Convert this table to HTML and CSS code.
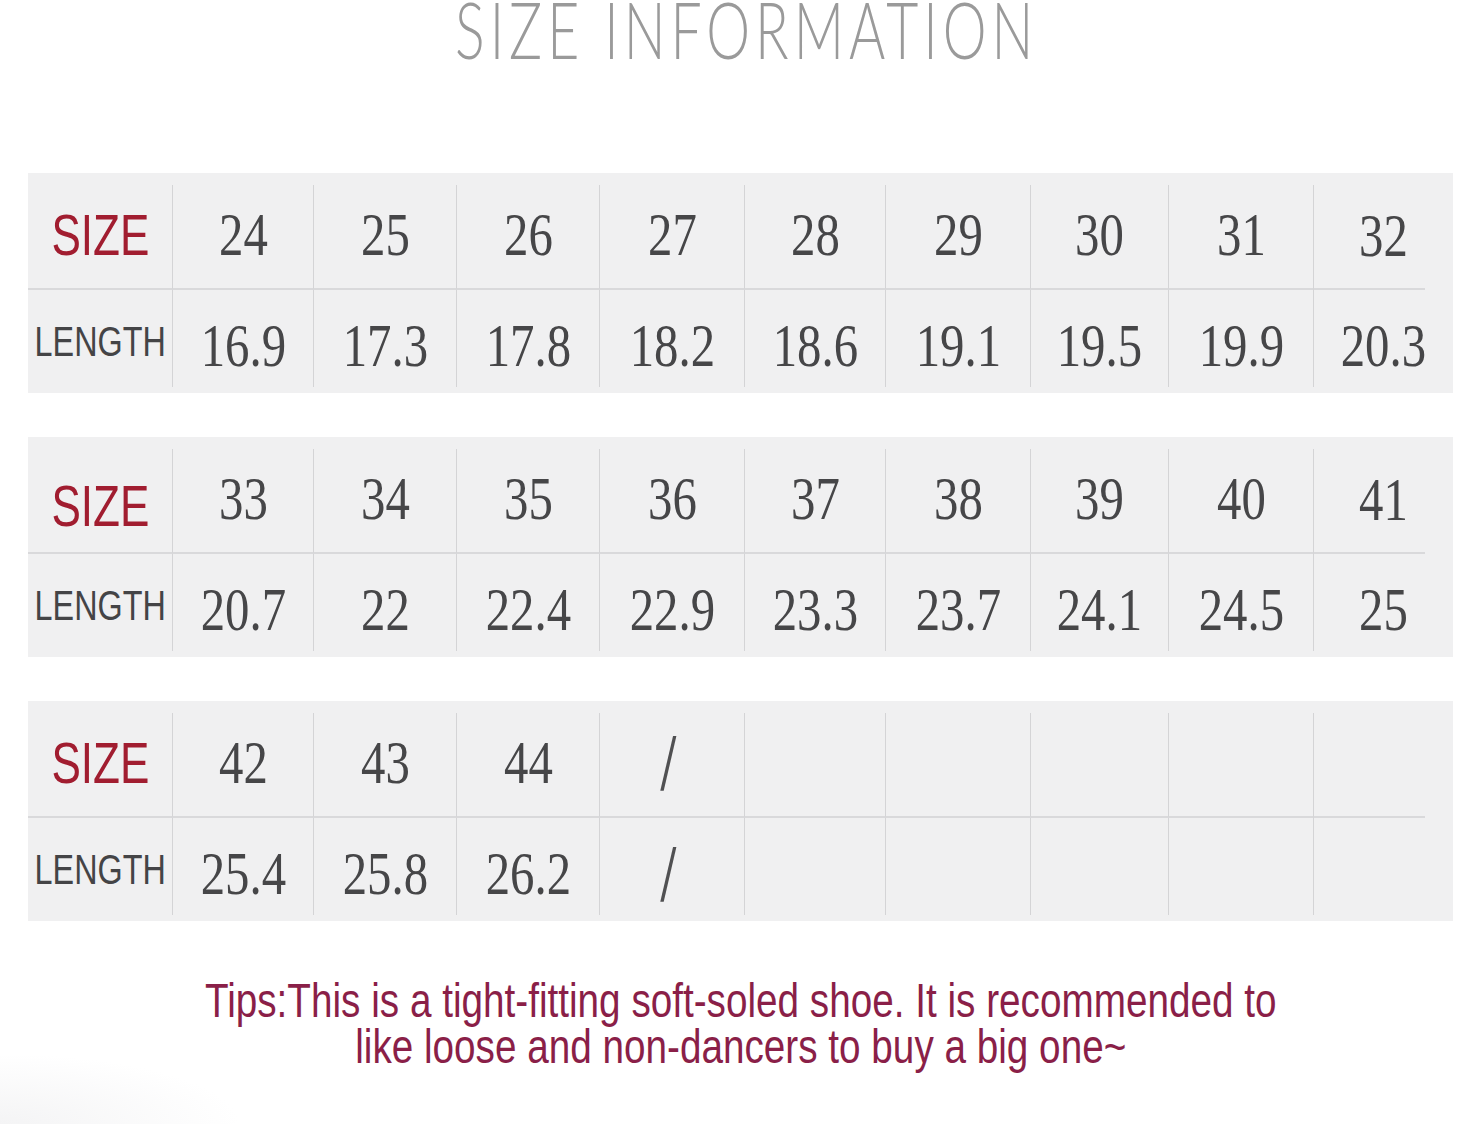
FILE: index.html
```html
<!DOCTYPE html>
<html lang="en">
<head>
<meta charset="utf-8">
<title>Size Information</title>
<link rel="stylesheet" href="styles.css">
</head>
<body>
<main class="page">
  <header class="header">
    <h1 class="title"><span class="title__text">SIZE INFORMATION</span></h1>
  </header>

  <section class="chart">
    <div class="panel">
      <div class="cell cell--top cell--label"><span class="label label--size">SIZE</span></div>
      <div class="cell cell--top cell--line"><span class="num">24</span></div>
      <div class="cell cell--top cell--line"><span class="num">25</span></div>
      <div class="cell cell--top cell--line"><span class="num">26</span></div>
      <div class="cell cell--top cell--line"><span class="num">27</span></div>
      <div class="cell cell--top cell--line"><span class="num">28</span></div>
      <div class="cell cell--top cell--line"><span class="num">29</span></div>
      <div class="cell cell--top cell--line"><span class="num">30</span></div>
      <div class="cell cell--top cell--line"><span class="num">31</span></div>
      <div class="cell cell--top cell--line cell--end"><span class="num">32</span></div>

      <div class="cell cell--bottom cell--label"><span class="label label--length">LENGTH</span></div>
      <div class="cell cell--bottom cell--line"><span class="num">16.9</span></div>
      <div class="cell cell--bottom cell--line"><span class="num">17.3</span></div>
      <div class="cell cell--bottom cell--line"><span class="num">17.8</span></div>
      <div class="cell cell--bottom cell--line"><span class="num">18.2</span></div>
      <div class="cell cell--bottom cell--line"><span class="num">18.6</span></div>
      <div class="cell cell--bottom cell--line"><span class="num">19.1</span></div>
      <div class="cell cell--bottom cell--line"><span class="num">19.5</span></div>
      <div class="cell cell--bottom cell--line"><span class="num">19.9</span></div>
      <div class="cell cell--bottom cell--line"><span class="num">20.3</span></div>
    </div>

    <div class="panel">
      <div class="cell cell--top cell--label"><span class="label label--size label--low">SIZE</span></div>
      <div class="cell cell--top cell--line"><span class="num">33</span></div>
      <div class="cell cell--top cell--line"><span class="num">34</span></div>
      <div class="cell cell--top cell--line"><span class="num">35</span></div>
      <div class="cell cell--top cell--line"><span class="num">36</span></div>
      <div class="cell cell--top cell--line"><span class="num">37</span></div>
      <div class="cell cell--top cell--line"><span class="num">38</span></div>
      <div class="cell cell--top cell--line"><span class="num">39</span></div>
      <div class="cell cell--top cell--line"><span class="num">40</span></div>
      <div class="cell cell--top cell--line cell--end"><span class="num">41</span></div>

      <div class="cell cell--bottom cell--label"><span class="label label--length">LENGTH</span></div>
      <div class="cell cell--bottom cell--line"><span class="num">20.7</span></div>
      <div class="cell cell--bottom cell--line"><span class="num">22</span></div>
      <div class="cell cell--bottom cell--line"><span class="num">22.4</span></div>
      <div class="cell cell--bottom cell--line"><span class="num">22.9</span></div>
      <div class="cell cell--bottom cell--line"><span class="num">23.3</span></div>
      <div class="cell cell--bottom cell--line"><span class="num">23.7</span></div>
      <div class="cell cell--bottom cell--line"><span class="num">24.1</span></div>
      <div class="cell cell--bottom cell--line"><span class="num">24.5</span></div>
      <div class="cell cell--bottom cell--line"><span class="num">25</span></div>
    </div>

    <div class="panel">
      <div class="cell cell--top cell--label"><span class="label label--size">SIZE</span></div>
      <div class="cell cell--top cell--line"><span class="num">42</span></div>
      <div class="cell cell--top cell--line"><span class="num">43</span></div>
      <div class="cell cell--top cell--line"><span class="num">44</span></div>
      <div class="cell cell--top cell--line"><span class="num num--slash">/</span></div>
      <div class="cell cell--top cell--line"></div>
      <div class="cell cell--top cell--line"></div>
      <div class="cell cell--top cell--line"></div>
      <div class="cell cell--top cell--line"></div>
      <div class="cell cell--top cell--line cell--end"></div>

      <div class="cell cell--bottom cell--label"><span class="label label--length">LENGTH</span></div>
      <div class="cell cell--bottom cell--line"><span class="num">25.4</span></div>
      <div class="cell cell--bottom cell--line"><span class="num">25.8</span></div>
      <div class="cell cell--bottom cell--line"><span class="num">26.2</span></div>
      <div class="cell cell--bottom cell--line"><span class="num num--slash">/</span></div>
      <div class="cell cell--bottom cell--line"></div>
      <div class="cell cell--bottom cell--line"></div>
      <div class="cell cell--bottom cell--line"></div>
      <div class="cell cell--bottom cell--line"></div>
      <div class="cell cell--bottom cell--line"></div>
    </div>
  </section>

  <div class="tips">
    <p class="tips__text">Tips:This is a tight-fitting soft-soled shoe. It is recommended to<br>like loose and non-dancers to buy a big one~</p>
  </div>
</main>
</body>
</html>
```

FILE: styles.css
```css
* {
  box-sizing: border-box;
}

html,
body {
  margin: 0;
  padding: 0;
}

body {
  width: 1457px;
  height: 1124px;
  overflow: hidden;
  background:
    radial-gradient(ellipse 240px 70px at 0% 100%, #f4f4f5 0%, rgba(255, 255, 255, 0) 100%),
    #ffffff;
  font-family: "Liberation Sans", Arial, sans-serif;
}

.page {
  width: 1425px;
  margin-left: 28px;
  display: flex;
  flex-direction: column;
}

/* ---------- header ---------- */
.header {
  height: 173px;
  display: flex;
  justify-content: center;
  align-items: flex-start;
  padding-left: 12px;
}

.title {
  margin: 0;
  font-family: "Lato", "Liberation Sans", sans-serif;
  font-weight: 300;
  font-size: 78px;
  line-height: 58px;
  color: #9a9a9a;
  display: flex;
  justify-content: center;
  width: 100%;
}

.title__text {
  display: inline-block;
  white-space: nowrap;
  letter-spacing: 7px;
  transform: scaleX(0.71);
  transform-origin: center;
}

/* ---------- chart ---------- */
.chart {
  display: flex;
  flex-direction: column;
  gap: 44px;
}

.panel {
  background: #f0f0f1;
  padding: 12px 0 6px 0;
  display: grid;
  grid-template-columns: 144px 141px 143px 143px 145px 141px 145px 138px 145px 140px;
  grid-template-rows: 105px 97px;
}

.cell {
  display: flex;
  align-items: center;
  justify-content: center;
  min-width: 0;
}

.cell--line {
  border-left: 1px solid #d4d4d6;
}

.cell--top {
  border-bottom: 2px solid #d9d9db;
  padding-bottom: 4px;
}

.cell--top.cell--end {
  border-bottom: none;
  background-image: linear-gradient(#d9d9db, #d9d9db);
  background-repeat: no-repeat;
  background-size: calc(100% - 28px) 2px;
  background-position: left bottom;
}

.cell--bottom {
  padding-top: 14px;
}

.label {
  display: inline-block;
  white-space: nowrap;
  transform-origin: center;
}

.label--size {
  font-family: "Liberation Sans", Arial, sans-serif;
  font-size: 58px;
  line-height: 58px;
  color: #a11d30;
  transform: scaleX(0.76);
}

.label--low {
  margin-top: 14px;
}

.label--length {
  font-family: "Liberation Sans", Arial, sans-serif;
  font-size: 42px;
  line-height: 42px;
  color: #444446;
  transform: scaleX(0.77);
}

.cell--bottom .label--length {
  margin-top: -8px;
}

.num {
  display: inline-block;
  white-space: nowrap;
  font-family: "Liberation Serif", "Times New Roman", serif;
  font-size: 61px;
  line-height: 60px;
  color: #464648;
  transform: scaleX(0.8);
  transform-origin: center;
}

.num--slash {
  font-size: 82px;
  line-height: 60px;
  color: #505052;
  transform: scaleX(0.85) skewX(4deg);
  margin-right: 8px;
}

/* ---------- tips ---------- */
.tips {
  margin: 57px 0 0 0;
  display: flex;
  justify-content: center;
}

.tips__text {
  margin: 0;
  display: inline-block;
  white-space: nowrap;
  text-align: center;
  font-family: "Liberation Sans", Arial, sans-serif;
  font-size: 48px;
  line-height: 46px;
  color: #8a1f48;
  transform: scaleX(0.806);
  transform-origin: center;
}
```
